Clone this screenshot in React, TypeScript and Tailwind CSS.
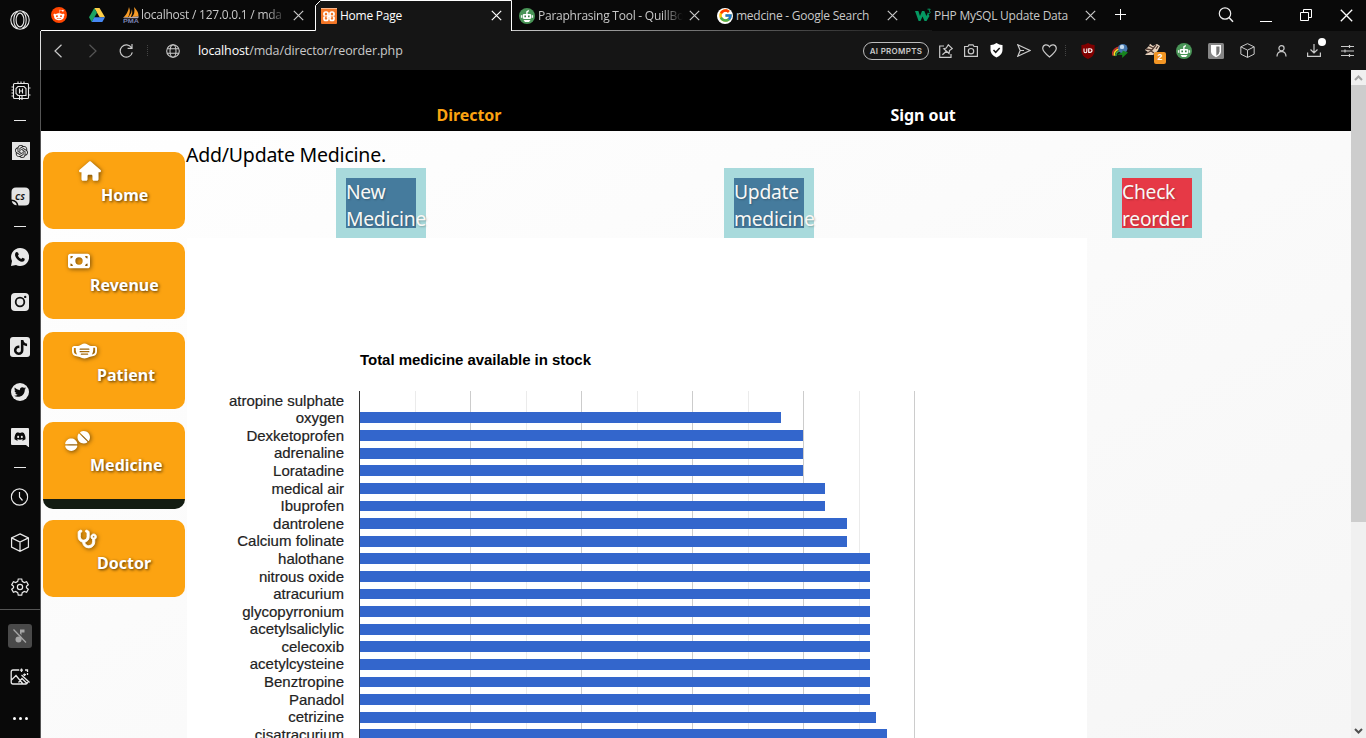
import React from "react";
import {
  FaHouse, FaMoneyBill, FaMaskFace, FaTablets, FaStethoscope, FaTiktok, FaTwitter,
} from "react-icons/fa6";
import { SiOpenai } from "react-icons/si";
import { FcGoogle } from "react-icons/fc";
import { FaRedditAlien, FaDiscord } from "react-icons/fa";

const line = { fill: "none", stroke: "currentColor", strokeWidth: 1.2 } as const;

function Svg({ w, h, vb, className, children }: { w: number; h: number; vb?: string; className?: string; children: React.ReactNode }) {
  return (
    <svg width={w} height={h} viewBox={vb ?? `0 0 ${w} ${h}`} className={`shrink-0 ${className ?? ""}`}>
      {children}
    </svg>
  );
}

const Close = ({ className }: { className?: string }) => (
  <Svg w={11} h={11} className={className}><path d="M.8.8 10.2 10.2M10.2.8.8 10.2" {...line} /></Svg>
);

const Cube = ({ s }: { s: number }) => (
  <Svg w={s} h={s} vb="0 0 18 18"><path d="M9 .8 17 4.6V13.4L9 17.3 1 13.4V4.6ZM1 4.6 9 8.6 17 4.6M9 8.6V17.3" {...line} /></Svg>
);

const Robot = () => (
  <Svg w={16} h={16}>
    <circle cx="8" cy="8" r="8" fill="#499557" />
    <path d="M7.2 6V3.6L9.8 1.8V3.4L8.6 4.2V6H10.8Q12.4 6 12.4 7.4V9.6Q12.4 11 10.8 11H5.2Q3.6 11 3.6 9.6V7.4Q3.6 6 5.2 6Z" fill="#fff" />
    <path d="M2.4 7.2V9.8M13.6 7.2V9.8" stroke="#fff" strokeWidth="1" /><path d="M4.5 12H11.5L10 14H6Z" fill="#fff" />
    <path d="M5.4 7.6H7V9.2H5.4ZM9 7.6H10.6V9.2H9Z" fill="#377c45" />
  </Svg>
);

function Rail() {
  return (
    <aside className="flex w-10 shrink-0 flex-col items-center bg-[#090909] text-[#e8e8e8]">
      <div className="mb-[30px] flex h-10 items-center">
        <Svg w={20} h={20}><g {...line} strokeWidth={1.1}><circle cx="10" cy="10" r="9.2" /><ellipse cx="10" cy="10" rx="3.9" ry="6.9" /><path d="M8 1.4C2.4 4.5 2.4 15.5 8 18.6M12 1.4C17.6 4.5 17.6 15.5 12 18.6" /></g></Svg>
      </div>
      <div className="flex h-[42px] items-center">
        <Svg w={20} h={20} className="translate-x-px"><g {...line} strokeWidth={1.1}>
          <rect x="2.5" y="2.5" width="15" height="15" rx="1" /><path d="M7 5.5H13L15 7.5V14.5H7L5 12.5V7.5ZM7 2.5V.5M10 2.5V.5M13 2.5V.5M8.5 14.5V19M11 14.5V19M.5 6H2.5M.5 9H2.5M.5 12H2.5M.5 15H2.5M17.5 7H19.5M17.5 14H19.5M8.5 7.5V12.5M11.5 7.5V12.5M8.5 10H11.5" />
        </g></Svg>
      </div>
      <div className="flex h-4 items-center pt-px"><i className="h-px w-3 bg-[#e8e8e8]" /></div>
      <div className="flex h-[46px] items-center"><div className="flex size-[18px] translate-x-px items-center justify-center bg-[#e4e4e4]"><SiOpenai size={13} color="#1b1b1b" /></div></div>
      <div className="flex h-11 items-center">
        <Svg w={19} h={19}>
          <path d="M5 .5H14Q18.5.5 18.5 5V14Q18.5 18.5 14 18.5H7.5Q6.5 13 .5 12.5V5Q.5.5 5 .5Z" fill="#e4e4e4" />
          <path d="M.8 14Q5 14.5 5.8 18.3Q1.5 18 .8 14Z" fill="#e4e4e4" />
          <text x="4" y="12.8" fontSize="8.5" fontWeight="700" fontStyle="italic" fontFamily="Open Sans, sans-serif" fill="#151515">CS</text>
        </Svg>
      </div>
      <div className="flex h-4 items-center pt-px"><i className="h-px w-3 bg-[#e8e8e8]" /></div>
      <div className="flex h-[46px] items-center">
        <Svg w={18} h={18}><path d="M9 0A9 9 0 1 1 5 17L0 18 1 13A9 9 0 0 1 9 0Z" fill="#e8e8e8" /><path d="M5.3 4.1 7 4.4 7.8 6.5 6.9 7.8Q8 10 10.2 11L11.5 9.8 13.7 10.8Q13.8 13.6 11 13.8C6.8 13 4.4 9.5 4 7Q4 4.8 5.3 4.1Z" fill="#0b0b0b" /></Svg>
      </div>
      <div className="flex h-11 items-center">
        <Svg w={18} h={18}><rect width="18" height="18" rx="4" fill="#e8e8e8" /><circle cx="9" cy="9" r="4.3" fill="none" stroke="#111" strokeWidth="1.8" /><circle cx="14.2" cy="3.9" r="1.2" fill="#111" /></Svg>
      </div>
      <div className="flex h-[46px] items-center"><div className="flex size-5 items-center justify-center rounded-[3px] bg-[#e8e8e8]"><FaTiktok size={15} color="#0b0b0b" /></div></div>
      <div className="flex h-11 items-center"><div className="flex size-[18px] items-center justify-center rounded-full bg-[#e8e8e8]"><FaTwitter size={12} color="#0b0b0b" /></div></div>
      <div className="flex h-[46px] items-center">
        <Svg w={18} h={20}><path d="M1 1H17Q18 1 18 2V20.5L15 18H1Q0 18 0 17V2Q0 1 1 1Z" fill="#e8e8e8" /><g transform="translate(3 3.5)"><FaDiscord size={12} color="#0b0b0b" /></g></Svg>
      </div>
      <div className="flex h-3.5 items-center pt-px"><i className="h-px w-3 bg-[#e8e8e8]" /></div>
      <div className="flex h-[46px] items-center"><Svg w={18} h={18} className="-translate-x-[0.5px]"><circle cx="9" cy="9" r="8.2" {...line} /><path d="M9 4V9L12 12.5" {...line} /></Svg></div>
      <div className="flex h-11 -translate-x-[0.5px] items-center"><Cube s={19} /></div>
      <div className="flex h-[45px] items-center">
        <Svg w={18} h={18} vb="0 0 24 24"><g fill="none" stroke="currentColor" strokeWidth="1.6"><circle cx="12" cy="12" r="3.5" /><path d="M9.7 1.3H14.3L15 4.5 17.7 6 20.8 5 23 9 20.6 11V13L23 15 20.8 19 17.7 18 15 19.5 14.3 22.7H9.7L9 19.5 6.3 18 3.2 19 1 15 3.4 13V11L1 9 3.2 5 6.3 6 9 4.5Z" /></g></Svg>
      </div>
      <div className="h-px w-full bg-[#555]" />
      <div className="flex h-[52px] items-center">
        <div className="flex size-6 items-center justify-center rounded-[3px] bg-[#494949] text-[#a6a6a6]">
          <Svg w={16} h={16}><circle cx="6.5" cy="11.5" r="3" fill="currentColor" /><path d="M8 11.5V1.5H12.5V4.5H9.5V11.5Z" fill="currentColor" /><path d="M2.5 1 15 13.5" stroke="#494949" strokeWidth="1.5" /><path d="M1.5 1.5 14 14.5" stroke="currentColor" strokeWidth="1.3" /></Svg>
        </div>
      </div>
      <div className="flex h-[30px] items-center">
        <Svg w={20} h={18}><g {...line} strokeWidth={1.3}><path d="M9 2H3Q1.2 2 1.2 4V14Q1.2 16 3 16H16Q17.5 16 17.5 14M17.5 5V7M1.5 12 6 7.5 13 16M8.5 14.5 12 10.5 17 15.5M11.5 7 19.5 14.5M11.5 .5V4M9.7 2.2H13M15 2H17.5V4M14.5 5.5V8M13.2 6.7H16" /></g></Svg>
      </div>
      <div className="mt-1.5 flex h-10 items-center gap-[3px]">
        <i className="size-[3px] rounded-full bg-white" /><i className="size-[3px] rounded-full bg-white" /><i className="size-[3px] rounded-full bg-white" />
      </div>
    </aside>
  );
}

const tabText = "overflow-hidden whitespace-nowrap font-['Open_Sans','Noto_Sans',sans-serif] text-[12px] leading-4 tracking-[-0.24px]";
const faded = "[mask-image:linear-gradient(to_right,black_86%,transparent)]";

function Tabs() {
  return (
    <div className="flex h-[31px] bg-[#090909] text-[#c8c8c8]">
      <div className="flex w-[274px] items-center border-b border-white pl-2.5">
        <div className="flex size-4 shrink-0 items-center justify-center rounded-full bg-[#ff4500]"><FaRedditAlien size={12} color="#fff" /></div>
        <Svg w={16} h={14} className="ml-[22px]">
          <path d="M5.3 0H10.5L16 9.3H10.7Z" fill="#ffcf48" /><path d="M5.3 0 8 4.7 2.7 14 0 9.3Z" fill="#1da362" /><path d="M5.3 9.3H16L13.3 14H2.7Z" fill="#4688f4" />
        </Svg>
        <Svg w={17} h={16} className="ml-[18px]">
          <path d="M6 0Q8 5 5 10L.5 10.5Q5 6 6 0ZM9 2Q10 6 8 10H5.5Q9 6 9 2ZM11 0Q16 5 15.5 9.5L9 10Q12.5 6 11 0Z" fill="#f89c27" />
          <path d="M0 10.5 16 9.5 15 11.2H1Z" fill="#b7abb5" />
          <text x="0" y="15.6" fontSize="6" fontWeight="700" fontFamily="Liberation Sans, sans-serif" textLength="16" lengthAdjust="spacingAndGlyphs" fill="#7b83b4">PMA</text>
        </Svg>
        <div className={`${tabText} ${faded} ml-px w-[146px]`}>localhost / 127.0.0.1 / mda</div>
        <Close className="ml-1.5" />
      </div>
      <div className="relative ml-px flex w-[196px] items-center bg-[#151515] pl-[5px] text-white">
        <svg width="197" height="31" className="absolute top-0 -left-px"><path d="M0 0H6L.5 5.5V31H0Z" fill="#090909" /><path d="M0 30.5H.5V5.5L5.5.5H196.5V31" fill="none" stroke="#fff" /></svg>
        <Svg w={16} h={16}>
          <rect width="16" height="16" rx="1" fill="#f37626" /><path d="M0 .5H16" stroke="#f9b78d" strokeWidth="1" />
          <g fill="none" stroke="#fff" strokeWidth="1.7"><rect x="3" y="4" width="4" height="4.2" rx="1.7" /><rect x="9" y="4" width="4" height="4.2" rx="1.7" /><rect x="3" y="8.2" width="4" height="4.2" rx="1.7" /><rect x="9" y="8.2" width="4" height="4.2" rx="1.7" /></g>
          <path d="M5 8.2H11" stroke="#fff" strokeWidth="2" /><path d="M2 8.2H3.4M12.6 8.2H14M3.9 8.2H6.2M9.8 8.2H12.1" stroke="#f37626" strokeWidth="0.8" />
        </Svg>
        <div className={`${tabText} ml-[3px] w-[148px]`}>Home Page</div>
        <Close className="ml-[3px]" />
      </div>
      <div className="relative flex grow items-center pl-[7px]">
        <div className="absolute bottom-0 left-0 h-px w-[420px] bg-linear-to-r from-[#c8c8c8] to-[#161616]" />
        <Robot />
        <div className={`${tabText} ${faded} ml-[3px] w-[145px]`}>Paraphrasing Tool - QuillBo</div>
        <Close className="ml-1.5" />
        <div className="ml-[17px] flex size-4 shrink-0 items-center justify-center rounded-full bg-white"><FcGoogle size={15} /></div>
        <div className={`${tabText} ml-[3px] w-[140px]`}>medcine - Google Search</div>
        <Close className="ml-[11px]" />
        <Svg w={17} h={16} className="ml-[17px]">
          <path d="M0 3H3.4L5 8 7 3H9.3L11.4 8 13 5 14.5 8 11.5 13H9.5L7.5 8.5 5.5 13H3.6Z" fill="#059862" />
          <path d="M12.5 1.2H15.2L14 3Q15.5 3.3 15.2 4.7Q14.5 6 12.6 5.3" fill="none" stroke="#059862" />
        </Svg>
        <div className={`${tabText} ml-0.5 w-[140px]`}>PHP MySQL Update Data</div>
        <Close className="ml-[11px]" />
        <Svg w={11} h={11} className="mb-[3px] ml-[19px] text-white"><path d="M5.5 0V11M0 5.5H11" fill="none" stroke="currentColor" /></Svg>
        <Svg w={16} h={16} className="mb-0.5 ml-[92px] text-[#eee]"><circle cx="7" cy="6.5" r="5.7" {...line} /><path d="M11 10.5 15 14.7" {...line} strokeWidth={1.5} /></Svg>
        <div className="mt-[11px] ml-[26px] h-px w-3 bg-white" />
        <Svg w={13} h={13} className="ml-[28px] text-white"><path d="M.5 3.5H8.5V11.5H.5ZM3.5 3.5V.5H11.5V8.5H8.5" fill="none" stroke="currentColor" /></Svg>
        <Svg w={13} h={13} className="ml-[27px] text-white"><path d="M.8.8 12.2 12.2M12.2.8.8 12.2" {...line} strokeWidth={1.3} /></Svg>
      </div>
    </div>
  );
}

const Dots = ({ className }: { className: string }) => <div className={`h-[11px] border-l border-dotted border-[#444] ${className}`} />;

function Toolbar() {
  return (
    <div className="flex h-[39px] items-center bg-[#151515] text-[#c9c9c9]">
      <Svg w={8} h={14} className="ml-[13px]"><path d="M7.5.7 1 7 7.5 13.3" {...line} /></Svg>
      <Svg w={8} h={14} className="ml-[27px] text-[#555]"><path d="M.5.7 7 7 .5 13.3" {...line} /></Svg>
      <Svg w={15} h={14} className="ml-[22px]"><path d="M12.5 3.8A6.1 6.1 0 1 0 13.3 8.3M13 0V4.3H8.6" {...line} /></Svg>
      <Dots className="ml-[13px]" />
      <Svg w={14} h={14} className="ml-[18px]"><g {...line} strokeWidth={1.1}><circle cx="7" cy="7" r="6.3" /><ellipse cx="7" cy="7" rx="3" ry="6.3" /><path d="M1.2 4.7H12.8M1.2 9.3H12.8" /></g></Svg>
      <div className="ml-[18px] w-[662px] whitespace-nowrap pt-px font-['Open_Sans','Noto_Sans',sans-serif] text-[12.5px] leading-4 tracking-[-0.13px]"><span className="text-white">localhost</span>/mda/director/reorder.php</div>
      <div className="ml-[3px] flex h-[18px] w-[66px] items-center justify-center rounded-full border border-[#bdbdbd] font-[Inter,sans-serif] text-[8px] font-semibold tracking-[0.3px]">AI PROMPTS</div>
      <Svg w={14} h={14} className="ml-[10px]"><path d="M5 2H.7V13.3H12V10M7.3 4 9.3.8 13.3 4.6 10.5 6.5 10 9.5 4.8 4.8ZM7.4 7.2 3.4 10.8" {...line} /></Svg>
      <Svg w={14} h={14} className="ml-[11px]"><path d="M.6 2.5H4L5 .8H9L10 2.5H13.4V12.4H.6Z" {...line} /><circle cx="7" cy="7.2" r="2.7" {...line} /></Svg>
      <Svg w={13} h={15} className="ml-3"><path d="M6.5 0Q9.5 2.2 12.5 2V7Q12.5 12 6.5 14.5Q.5 12 .5 7V2Q3.5 2.2 6.5 0Z" fill="#fff" /><path d="M3.5 7 5.7 9.3 9.7 5" fill="none" stroke="#151515" strokeWidth="1.5" /></Svg>
      <Svg w={14} h={13} className="ml-[14px]"><path d="M.8.8 13 6.5.8 12.2 3.2 6.5ZM3.2 6.5H7" {...line} /></Svg>
      <Svg w={15} h={14} className="ml-[11px]"><path d="M7.5 13C4 10.2.7 7.5.7 4.3 1 .4 5.5-.4 7.5 2.8 9.5-.4 14 .4 14.3 4.3 14.3 7.5 11 10.2 7.5 13Z" {...line} /></Svg>
      <Dots className="ml-[8px]" />
      <Svg w={14} h={16} className="ml-[15px]"><path d="M7 0Q10 2.1 13.6 2V8Q13.6 13 7 16Q.4 13 .4 8V2Q4 2.1 7 0Z" fill="#800000" /><path d="M3 5.5V8.2Q3 9.7 4.5 9.7Q5.8 9.7 5.8 8.2V5.5M7.7 5.8V9.4H8.8Q11 9.4 11 7.5Q11 5.8 8.8 5.8Z" fill="none" stroke="#fff" strokeWidth="1.1" /></Svg>
      <Svg w={16} h={16} className="ml-[17px]">
        <path d="M1 12.5Q-.8 6.5 7.5 4" fill="none" stroke="#c9302a" strokeWidth="1.5" /><path d="M2.4 12.8Q1 8.2 8 5.6" fill="none" stroke="#ffdc22" strokeWidth="1.6" /><path d="M4 13Q3 9.6 8.5 7.4" fill="none" stroke="#3ea84e" strokeWidth="1.5" />
        <circle cx="10.8" cy="5.6" r="4.7" fill="#4577ad" /><circle cx="10" cy="3.9" r="2.2" fill="#c5dbef" />
        <path d="M5 11.5 10.5 9.3V7.5L16 9.5 10.2 15V12Z" fill="#16851e" />
      </Svg>
      <div className="relative ml-4 h-4 w-4">
        <Svg w={17} h={15}><path d="M1 7 5 3 6 .8 9 3 13 1 16 3 13.5 8 9 12H1L4 9Z" fill="#e7d2bd" /><path d="M2 6 8 7 12 2M3 10 7 8 10 10M5 3 9 5M12 6 14 3" stroke="#513b32" strokeWidth="1.3" fill="none" /></Svg>
        <span className="absolute top-[9px] left-2.5 flex h-3 w-3 items-center justify-center rounded-[2px] bg-[#f29524] font-['Liberation_Sans',sans-serif] text-[9px] font-bold text-white">2</span>
      </div>
      <div className="ml-4"><Robot /></div>
      <Svg w={16} h={16} className="ml-4"><rect width="16" height="16" rx="1.5" fill="#868686" /><path d="M3 2H13V8.5Q13 12 8 14.3Q3 12 3 8.5Z" fill="#fff" /><path d="M8.3 3.5H11.5V8.5Q11.5 11 8.3 12.7Z" fill="#777" /></Svg>
      <div className="ml-4"><Cube s={15} /></div>
      <Svg w={11} h={12} className="ml-[21px]"><circle cx="5.5" cy="3.2" r="2.6" {...line} /><path d="M1 11.5Q1 6.8 5.5 6.3Q10 6.8 10 11.5" {...line} /></Svg>
      <div className="relative ml-5">
        <Svg w={14} h={13}><path d="M.6 8.5V12.4H13.4V8.5M7 0V9M3.5 5.5 7 9 10.5 5.5" {...line} /></Svg>
        <i className="absolute -top-[6px] left-[10.5px] size-2 rounded-full bg-white" />
      </div>
      <Svg w={13} h={12} className="ml-5"><path d="M0 1.5H13M0 6H13M0 10.5H13M8.5 0V3M4 4.5V7.5M8.5 9V12" {...line} /></Svg>
    </div>
  );
}

const iconShadow = "shrink-0 overflow-visible text-white drop-shadow-[1px_1px_2px_rgba(0,0,0,0.55)]";
const menu = [
  { label: "Home", pad: "pl-9", icon: <FaHouse className={`${iconShadow} h-5 w-[22px]`} /> },
  { label: "Revenue", pad: "pl-[25px]", icon: <FaMoneyBill className={`${iconShadow} -mt-px h-[22px] w-[22px]`} /> },
  { label: "Patient", pad: "pl-[29px]", icon: <FaMaskFace className={`${iconShadow} h-5 w-[25px]`} /> },
  { label: "Medicine", pad: "pl-[22px]", icon: <FaTablets className={`${iconShadow} h-5 w-[25px]`} /> },
  { label: "Doctor", pad: "pl-[34px]", icon: <FaStethoscope strokeWidth={24} stroke="white" className={`${iconShadow} h-5 w-[20px]`} /> },
];

function SideMenu() {
  return (
    <nav className="flex w-[145px] shrink-0 flex-col gap-[13px] pt-[21px] pl-0.5">
      {menu.map((m) => (
        <div key={m.label} className={m.label === "Medicine" ? "-mb-0.5 h-[87px] w-[142px] overflow-hidden rounded-[10px] border-b-10 border-[#131c12] bg-[#fca311]" : "h-[77px] w-[142px] rounded-[10px] bg-[#fca311]"}>
          <div className={`flex pt-[9px] ${m.pad}`}>
            {m.icon}
            <span className="pt-[23px] font-['Noto_Sans',sans-serif] text-[16px] leading-[22px] font-bold text-white [text-shadow:1px_1px_3px_rgba(0,0,0,0.7)]">{m.label}</span>
          </div>
        </div>
      ))}
    </nav>
  );
}

const stock: [string, number][] = [
  ["atropine sulphate", 0], ["oxygen", 421], ["Dexketoprofen", 443], ["adrenaline", 443], ["Loratadine", 443],
  ["medical air", 465], ["Ibuprofen", 465], ["dantrolene", 487], ["Calcium folinate", 487], ["halothane", 510],
  ["nitrous oxide", 510], ["atracurium", 510], ["glycopyrronium", 510], ["acetylsaliclylic", 510], ["celecoxib", 510],
  ["acetylcysteine", 510], ["Benztropine", 510], ["Panadol", 510], ["cetrizine", 516], ["cisatracurium", 527],
];
const grid = [228, 283, 339, 394, 450, 505, 561, 616, 672, 727];

function Chart() {
  return (
    <svg width="900" height="500" className="block bg-white" fontFamily="'Liberation Sans', Arial, sans-serif" fontSize="15">
      <text x="173" y="127" fontWeight="700" textLength="231">Total medicine available in stock</text>
      {grid.map((x, i) => <rect key={x} x={x} y="153" width="1" height="347" fill={i % 2 ? "#cccccc" : "#ebebeb"} />)}
      {stock.map(([name, w], i) => {
        const top = Math.round(156.85 + 17.61 * i);
        return (
          <g key={name}>
            {w > 0 && <rect x="173" y={top} width={w} height={Math.round(167.7 + 17.61 * i) - top} fill="#3366cc" />}
            <text x="157" y={Math.round(167.6 + 17.59 * i) + 0.4} textAnchor="end" fill="#222222" stroke="#222222" strokeWidth="0.2">{name}</text>
          </g>
        );
      })}
      <rect x="172" y="153" width="1" height="347" fill="#333333" />
    </svg>
  );
}

const actions = [
  { a: "New", b: "Medicine", bg: "bg-[#457b9d]" },
  { a: "Update", b: "medicine", bg: "bg-[#457b9d]" },
  { a: "Check", b: "reorder", bg: "bg-[#e63946]" },
];

function Page() {
  return (
    <div className="flex min-w-0 grow flex-col overflow-hidden bg-linear-to-br from-white to-[#f6f6f6]">
      <header className="flex h-[61px] shrink-0 bg-black pt-8 font-['Noto_Sans',sans-serif] text-[16px] leading-[26px] font-bold tracking-[-0.05px]">
        <span className="ml-[395.5px] w-[454px] shrink-0 text-[#fca311]">Director</span>
        <span className="text-white">Sign out</span>
      </header>
      <div className="flex grow">
        <SideMenu />
        <main className="min-w-0 grow">
          <h1 className="h-[37px] pt-2.5 font-['Noto_Sans',sans-serif] text-[19.5px] leading-[28px] tracking-[-0.22px] text-black">Add/Update Medicine.</h1>
          <div className="flex gap-[298px] pl-[150px]">
            {actions.map((x) => (
              <button key={x.a} className={`h-[70px] w-[90px] shrink-0 border-10 border-[#a8dadc] text-left font-['Noto_Sans',sans-serif] text-[19.3px] leading-[27px] tracking-[-0.28px] text-[#f8f8f6] [text-shadow:1px_1px_2px_rgba(0,0,0,0.25)] ${x.bg}`}>
                <span className="block h-[50px] whitespace-nowrap">{x.a}<br />{x.b}</span>
              </button>
            ))}
          </div>
          <div className="pl-px"><Chart /></div>
        </main>
      </div>
    </div>
  );
}

export default function App() {
  return (
    <div className="flex h-[738px] w-[1366px] overflow-hidden bg-[#090909]">
      <Rail />
      <div className="flex min-w-0 grow flex-col">
        <div className="pl-px"><Tabs /></div>
        <div className="border-l border-[#ddd]"><Toolbar /></div>
        <div className="flex h-[668px] border-l border-[#555]">
          <Page />
          <div className="flex w-[15px] shrink-0 flex-col bg-[#f0f0f0] text-[#a3a3a3]">
            <div className="flex h-[15px] items-center justify-center"><Svg w={9} h={6}><path d="M1 5 4.5 1.5 8 5" fill="none" stroke="currentColor" strokeWidth="2" /></Svg></div>
            <div className="h-[437px] bg-[#cdcdcd]" />
            <div className="mt-auto flex h-[15px] items-center justify-center text-[#505050]"><Svg w={9} h={6}><path d="M1 1 4.5 4.5 8 1" fill="none" stroke="currentColor" strokeWidth="2" /></Svg></div>
          </div>
        </div>
      </div>
    </div>
  );
}
